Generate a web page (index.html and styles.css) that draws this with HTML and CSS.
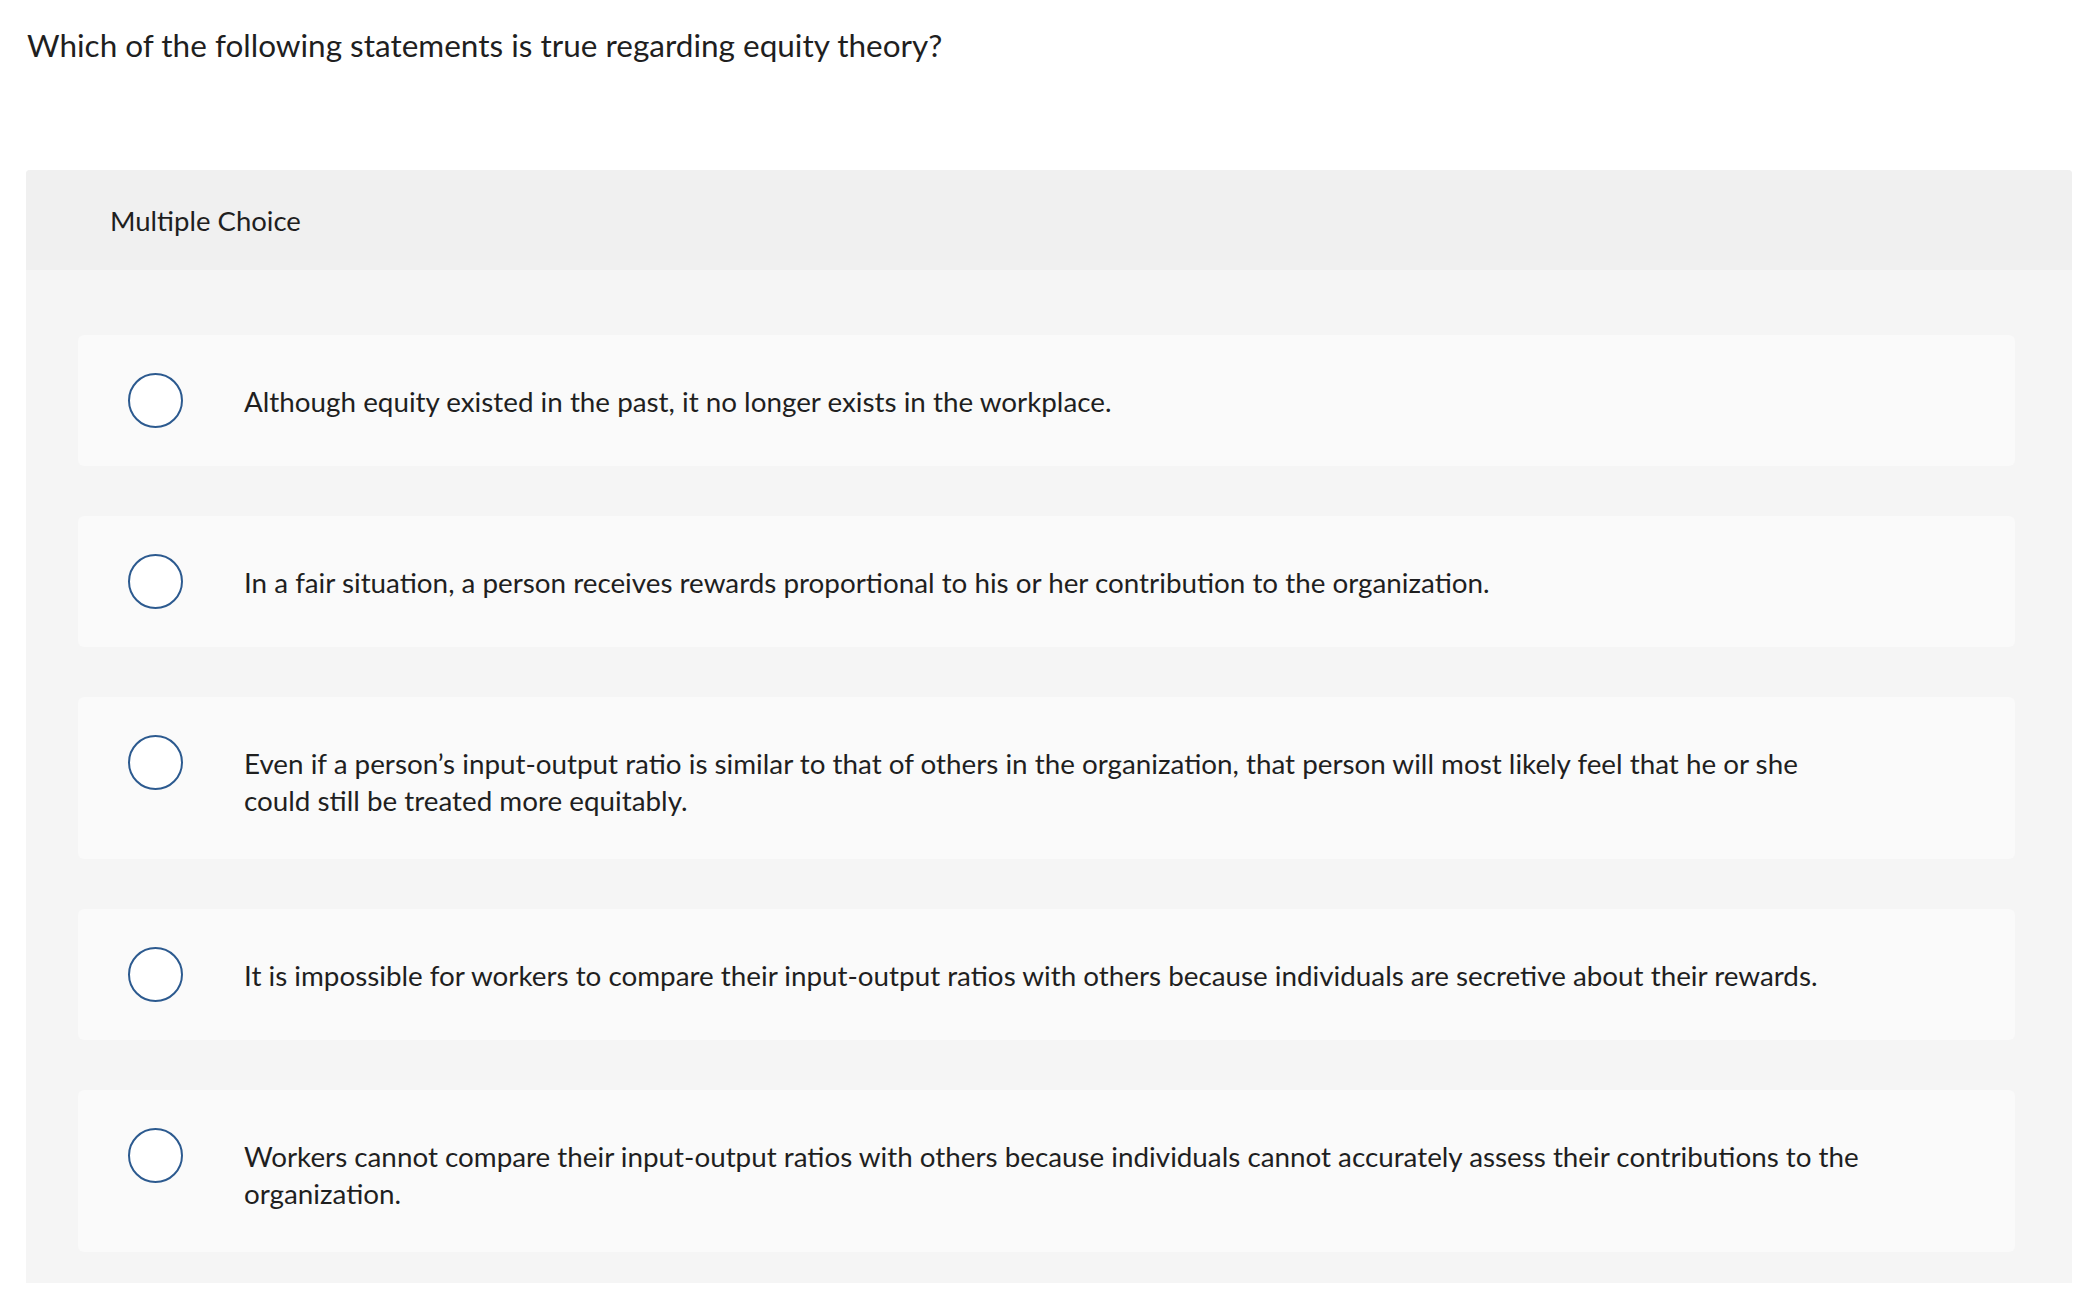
FILE: index.html
```html
<!DOCTYPE html>
<html lang="en">
<head>
  <meta charset="UTF-8" />
  <title>Multiple Choice</title>
  <link rel="stylesheet" href="styles.css">
</head>
<body>
  <h1 class="prompt">Which of the following statements is true regarding equity theory?</h1>

  <div class="question">
    <div class="question-header">Multiple Choice</div>

    <div class="choices">
      <label class="choice">
        <span class="radio"></span>
        <span class="choice-text">Although equity existed in the past, it no longer exists in the workplace.</span>
      </label>

      <label class="choice">
        <span class="radio"></span>
        <span class="choice-text">In a fair situation, a person receives rewards proportional to his or her contribution to the organization.</span>
      </label>

      <label class="choice">
        <span class="radio"></span>
        <span class="choice-text">Even if a person’s input-output ratio is similar to that of others in the organization, that person will most likely feel that he or she could still be treated more equitably.</span>
      </label>

      <label class="choice">
        <span class="radio"></span>
        <span class="choice-text">It is impossible for workers to compare their input-output ratios with others because individuals are secretive about their rewards.</span>
      </label>

      <label class="choice">
        <span class="radio"></span>
        <span class="choice-text">Workers cannot compare their input-output ratios with others because individuals cannot accurately assess their contributions to the organization.</span>
      </label>
    </div>
  </div>
</body>
</html>
```
FILE: styles.css
```css
body {
  margin: 0;
  background-color: #fff;
  color: #1f1f1f;
  font-family: Lato, "Liberation Sans", sans-serif;
}
.prompt {
  margin: 25px 0 0 27px;
  font-size: 31.5px;
  font-weight: normal;
  line-height: 40px;
}
.question {
  margin: 105px 16px 12px 26px;
  background-color: #f5f5f5;
  border-radius: 4px 4px 0 0;
  overflow: hidden;
}
.question-header {
  display: flex;
  align-items: center;
  height: 100px;
  padding-left: 84px;
  background-color: #f0f0f0;
  font-size: 27.5px;
  line-height: 37px;
}
.choices {
  display: flex;
  flex-direction: column;
  gap: 50px;
  padding: 65px 57px 31px 52px;
}
.choice {
  display: flex;
  align-items: flex-start;
  padding: 38px 50px;
  background-color: #fafafa;
  border-radius: 6px;
  cursor: pointer;
}
.radio {
  flex: none;
  box-sizing: border-box;
  width: 55px;
  height: 55px;
  border: 2.5px solid #2c5a8f;
  border-radius: 50%;
  background-color: #fff;
}
.choice-text {
  max-width: 1618px;
  margin-left: 61px;
  padding: 10px 0 2px;
  font-size: 27.8px;
  line-height: 37px;
}
```
